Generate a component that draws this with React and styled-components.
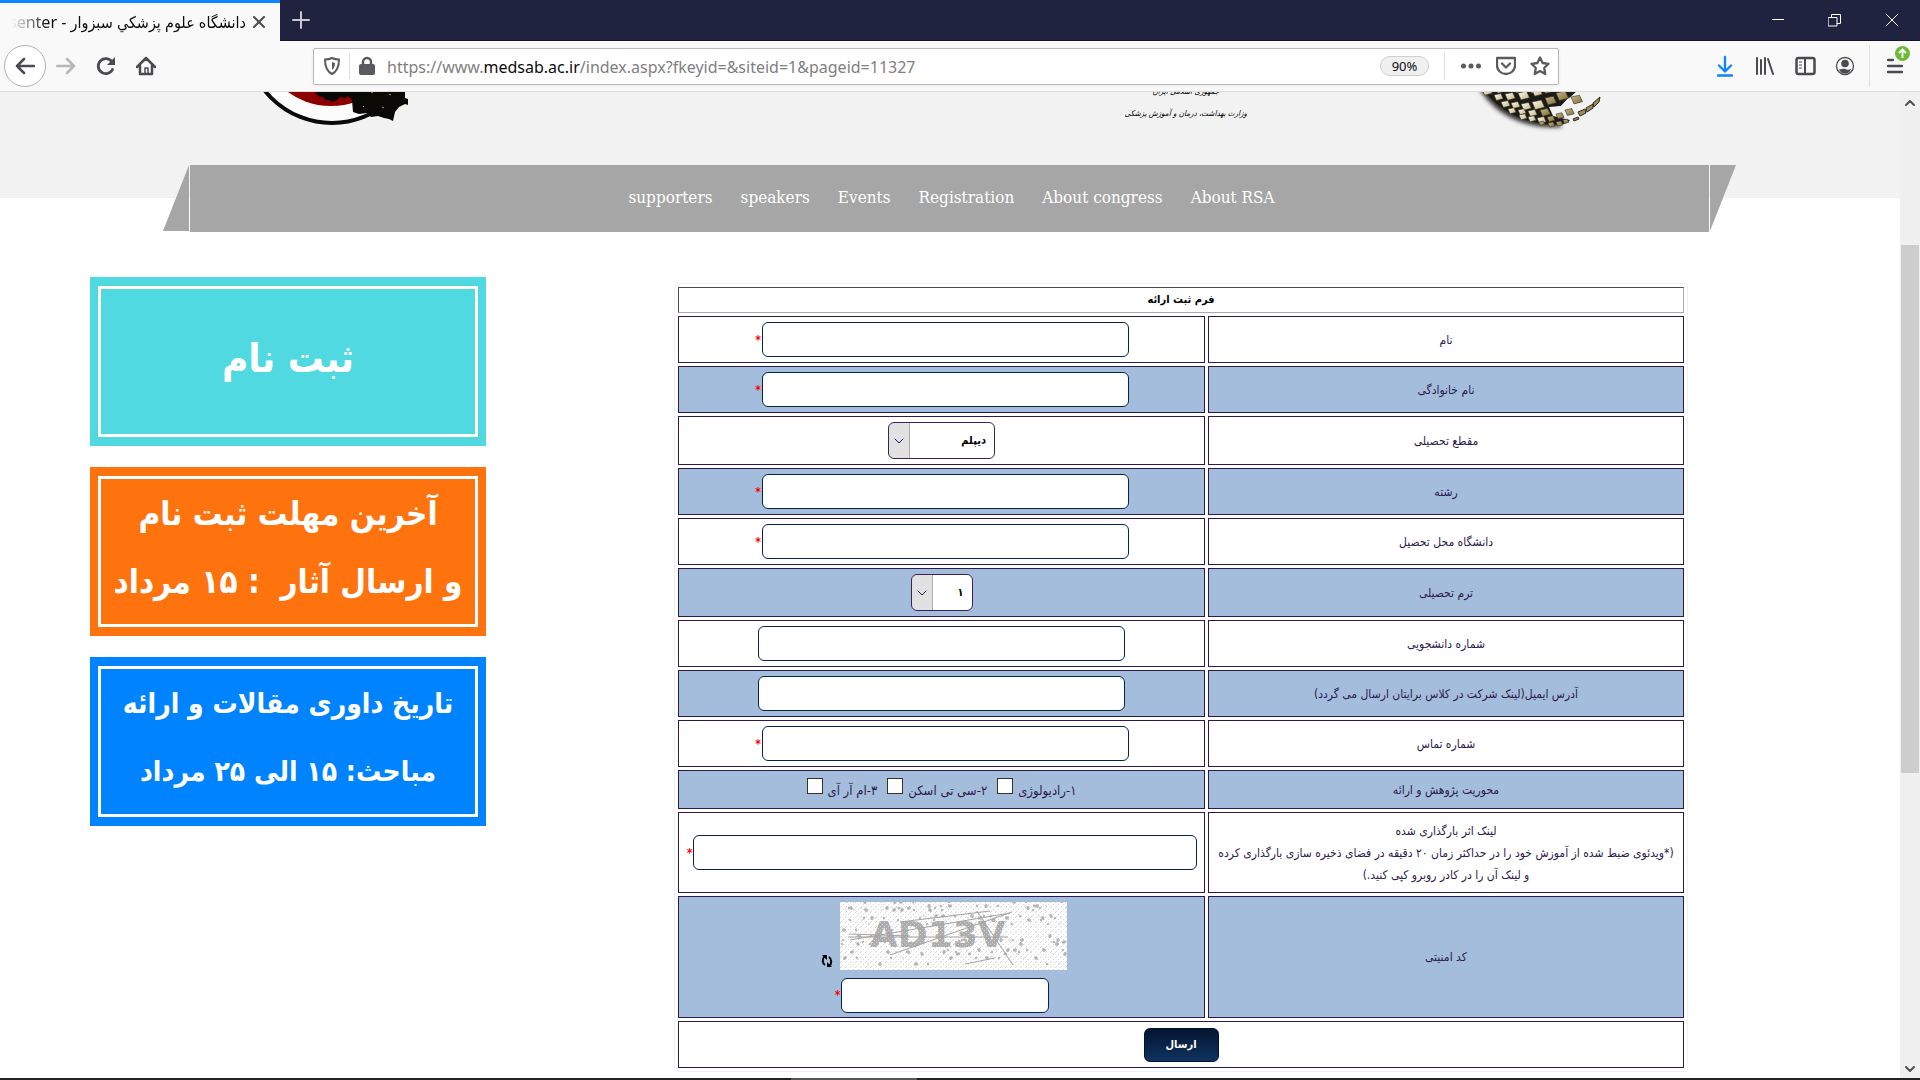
import React from "react";
import styled, { createGlobalStyle } from "styled-components";

const persian = `"DejaVu Sans Condensed", "DejaVu Sans", sans-serif`;
const ui = `"Noto Sans", "Open Sans", "DejaVu Sans Condensed", sans-serif`;
const ink = "#2c1a4d";

const GlobalStyle = createGlobalStyle`
  * { box-sizing: border-box; }
  body { margin: 0; background: #fff; }
  button, input, select { font: inherit; margin: 0; }
`;

const Window = styled.div`
  height: 100vh;
  display: flex;
  flex-direction: column;
  overflow: hidden;
  font-family: ${ui};
`;

/* ---------- browser chrome ---------- */

const TabStrip = styled.div`
  display: flex;
  flex: none;
  height: 41px;
  background: #20233f;
  border-bottom: 1px solid #14142c;
`;

const Tab = styled.div`
  display: flex;
  align-items: center;
  gap: 4px;
  width: 280px;
  height: 41px;
  padding: 0 12px;
  background: #f9f9fa;
  border-top: 3px solid #0a84ff;
`;

const TabTitle = styled.span`
  flex: 1;
  direction: rtl;
  overflow: hidden;
  white-space: nowrap;
  font-size: 16px;
  line-height: 24px;
  color: #0c0c0d;
  mask-image: linear-gradient(to right, transparent, #000 36px);
`;

const IconButton = styled.button`
  display: flex;
  flex: none;
  align-items: center;
  justify-content: center;
  width: ${(p) => p.$w || 40}px;
  height: ${(p) => p.$h || 40}px;
  padding: 0;
  border: 0;
  background: none;
  color: ${(p) => p.$color || "#4a4a4f"};
`;

const Spacer = styled.div`
  flex: 1;
`;

const Toolbar = styled.div`
  display: flex;
  flex: none;
  align-items: center;
  height: 51px;
  background: #f9f9fa;
  border-bottom: 1px solid #dcdcdc;
`;

const NavButtons = styled.div`
  display: flex;
  align-items: center;
  width: 313px;
  padding-left: 4px;
`;

const BackButton = styled(IconButton)`
  border: 1px solid #b1b1b3;
  border-radius: 50%;
  background: #fff;
`;

const UrlBar = styled.div`
  display: flex;
  flex: 1;
  align-items: center;
  height: 37px;
  padding: 0 1px;
  background: #fff;
  border: 1px solid #b8b8b8;
  border-radius: 2px;
  box-shadow: 0 1px 4px rgba(0, 0, 0, 0.06);
`;

const Divider = styled.span`
  flex: none;
  width: 1px;
  height: ${(p) => p.$h}px;
  margin: 0 ${(p) => p.$after || 0}px 0 ${(p) => p.$before || 0}px;
  background: #dedede;
`;

const Url = styled.span`
  flex: 1;
  font-size: 16px;
  line-height: 24px;
  white-space: nowrap;
  overflow: hidden;
  color: #808080;
  padding: 2px 0 0 3px;
  b {
    font-weight: 400;
    color: #0c0c0d;
  }
`;

const ZoomPill = styled.button`
  width: 49px;
  height: 20px;
  margin-right: 15px;
  padding: 0;
  border: 1px solid #cfcfcf;
  border-radius: 10px;
  background: #f0f0f0;
  font-size: 13px;
  line-height: 16px;
  color: #0c0c0d;
`;

const ToolbarEnd = styled.div`
  display: flex;
  align-items: center;
  justify-content: flex-end;
  width: 361px;
`;

const Badge = styled.span`
  position: absolute;
  top: -12px;
  left: 8px;
  display: flex;
`;

const MenuGlyph = styled.span`
  position: relative;
  display: flex;
`;

/* ---------- viewport ---------- */

const Viewport = styled.div`
  display: flex;
  flex: 1;
  min-height: 0;
`;

const Page = styled.div`
  flex: 1;
  min-width: 0;
  overflow: hidden;
`;

const Scrollbar = styled.div`
  display: flex;
  flex-direction: column;
  align-items: center;
  justify-content: space-between;
  width: 20px;
  padding: 6px 0 4px;
  color: #505050;
  background: linear-gradient(#cdcdcd, #cdcdcd) 1px 153px / 18px 528px no-repeat, #f0f0f0;
`;

const TaskbarEdge = styled.div`
  flex: none;
  height: 2px;
  background: linear-gradient(90deg, #555 0 0) 791px 0 / 126px 2px no-repeat, #222;
`;

const Header = styled.header`
  background: linear-gradient(#f2f2f2, #f2f2f2) top / 100% 106px no-repeat;
`;

const Brand = styled.div`
  display: flex;
  justify-content: space-between;
  height: 73px;
  padding: 0 285px 0 250px;
`;

const Ministry = styled.div`
  display: flex;
  gap: 218px;
`;

const MinistryName = styled.div`
  direction: rtl;
  text-align: center;
  font: italic 8px/22px ${persian};
  color: #000;
  white-space: nowrap;
  overflow: hidden;
  p {
    margin: 0;
  }
  p:first-child {
    margin-top: -11px;
  }
`;

const MenuBar = styled.nav`
  display: flex;
  gap: 1px;
  margin: 0 164px 0 163px;
`;

const Wing = styled.span`
  width: 26px;
  height: 66px;
  background: #a6a6a6;
  clip-path: ${(p) => (p.$left ? "polygon(100% 0, 100% 100%, 0 100%)" : "polygon(0 0, 100% 0, 0 100%)")};
`;

const MenuLinks = styled.div`
  display: flex;
  flex: 1;
  justify-content: center;
  gap: 28px;
  height: 67px;
  padding-top: 19px;
  padding-left: 4px;
  background: #a6a6a6;
`;

const MenuLink = styled.a`
  font: 17px/26px "DejaVu Serif Condensed", "DejaVu Serif", serif;
  color: #fff;
  text-decoration: none;
`;

const Content = styled.main`
  display: grid;
  grid-template-columns: minmax(0, 396px) minmax(0, 1014px);
  justify-content: space-between;
  align-items: start;
  padding: 45px 212px 0 90px;
`;

const Banners = styled.aside`
  display: grid;
  gap: 21px;
`;

const Banner = styled.a`
  display: block;
  height: 169px;
  padding: 9px 8px;
  background: ${(p) => p.$color};
  text-decoration: none;
`;

const BannerFrame = styled.span`
  display: flex;
  flex-direction: column;
  justify-content: center;
  height: 100%;
  padding-bottom: 8px;
  border: 3px solid #fff;
  direction: rtl;
  text-align: center;
  white-space: pre;
  color: #fff;
  font: 700 ${(p) => p.$size}px/68px ${persian};
`;

/* ---------- form ---------- */

const FormBox = styled.form`
  margin-top: 6px;
  border: 1px solid #eaf3fc;
  border-radius: 4px;
  direction: rtl;
`;

const FormTable = styled.table`
  width: 100%;
  table-layout: fixed;
  border-collapse: separate;
  border-spacing: 3px;
  font: 12px/22px ${persian};
  color: ${ink};
`;

const LabelCol = styled.col`
  width: 476px;
`;

const Title = styled.th`
  height: 26px;
  padding: 0;
  border: 1px solid #a9a9a9;
  border-top-color: #4c4c4c;
  border-left-color: #4c4c4c;
  font-size: 11px;
  line-height: 20px;
  color: #000;
`;

const Row = styled.tr`
  height: ${(p) => p.$h}px;
  background: ${(p) => (p.$tint ? "#a5bddd" : "#fff")};
`;

const Cell = styled.td`
  padding: 0 2px;
  border: 1px solid ${ink};
  text-align: center;
  background: inherit;
`;

const Field = styled.div`
  display: flex;
  align-items: center;
  justify-content: center;
`;

const TextInput = styled.input`
  width: ${(p) => p.$w}px;
  max-width: calc(100% - 7px);
  height: 35px;
  padding: 0 8px;
  border: 1px solid #06234a;
  border-radius: 6px;
  background: #fff;
`;

const Star = styled.span`
  width: 7px;
  font-weight: 700;
  font-size: 12px;
  line-height: 20px;
  color: #f00;
`;

const SelectBox = styled.span`
  position: relative;
  display: inline-flex;
  width: ${(p) => p.$w}px;
  vertical-align: top;
  svg {
    position: absolute;
    left: 6px;
    top: 16px;
    pointer-events: none;
  }
`;

const Select = styled.select`
  width: 100%;
  height: 37px;
  padding: 0 8px;
  appearance: none;
  border: 1px solid #3a2358;
  border-radius: 6px;
  background: linear-gradient(#adadad, #adadad) 20px 0 / 1px 100% no-repeat,
    linear-gradient(#e1e1e1, #e1e1e1) 0 0 / 20px 100% no-repeat, #fff;
  font-weight: 700;
  font-size: 11px;
  color: #000;
`;

const Checks = styled.div`
  display: flex;
  justify-content: center;
  gap: 10px;
`;

const Check = styled.span`
  display: flex;
  gap: 5px;
  align-items: flex-start;
  font-size: 13px;
  label {
    padding-top: 3px;
    line-height: 20px;
  }
  input {
    appearance: none;
    width: 16px;
    height: 16px;
    border: 1px solid #333;
    background: #fff;
  }
`;

const CaptchaRow = styled(Field)`
  align-items: flex-end;
  gap: 7px;
  padding-left: 5px;
  margin-bottom: 8px;
`;

const RefreshButton = styled.button`
  display: flex;
  padding: 0 0 2px;
  border: 0;
  background: none;
`;

const Submit = styled.button`
  display: block;
  width: 75px;
  height: 34px;
  margin: 0 auto;
  padding: 0;
  border: 1px solid #03132f;
  border-radius: 6px;
  background: linear-gradient(#03152f, #10335f);
  font-weight: 700;
  font-size: 11px;
  color: #fff;
`;

/* ---------- drawings ---------- */

const Svg = ({ w = 20, h = 20, sw = 2, children }) => (
  <svg width={w} height={h} viewBox={`0 0 ${w} ${h}`} fill="none" stroke="currentColor" strokeWidth={sw} strokeLinecap="round" strokeLinejoin="round" aria-hidden="true">
    {children}
  </svg>
);

const Congress = () => (
  <svg width="180" height="42" viewBox="0 0 180 42" aria-hidden="true">
    <ellipse cx="82" cy="-54" rx="91" ry="86" fill="#fcfcfc" />
    <circle cx="82" cy="-55" r="86" fill="none" stroke="#0a0a0a" strokeWidth="4" />
    <ellipse cx="81" cy="-46" rx="67" ry="60" fill="#8c0000" />
    <path d="M65 0 68 4 73 5 75 8 79 8 82 10 87 8 90 5 95 6 98 4 102 8 103 20 109 22 117 21 121 25 128 24 134 26 139 27 143 29 145 20 149 15 155 12 158 13 158 7 155 6 155 0Z" fill="#0a0906" />
    <path d="M121 0l2 1M139 2l2 1M113 14l1 1M132 15l2 1" stroke="#c69325" strokeWidth="1" />
  </svg>
);

const tiles = [
  [17, -3, 9], [30, -5, 9], [48, -6, 10], [63, -7, 12], [77, -6, 11],
  [29, 3, 8], [40, 2, 9], [53, 1, 10], [67, -2, 9], [80, 6, 10], [91, 1, 11], [103, -6, 9],
  [36, 10, 8], [46, 11, 8], [56, 12, 9], [67, 10, 11],
  [43, 17, 7], [53, 18, 7], [63, 19, 8], [75, 18, 9],
  [54, 23, 7], [63, 25, 7], [72, 26, 8],
  [82, 25, 7], [91, 22, 7], [100, 18, 8],
  [74, 30, 5], [83, 31, 6], [91, 30, 6], [98, 28, 5],
  [106, 5, 10],
];

const shards = [
  "M108 27l5-2 1 2-5 2z",
  "M113 20l7-3 1 4-6 3z",
  "M121 16l7-4 0 4-6 4z",
  "M128 11l7-6-1 5-5 5z",
];

const Globe = () => (
  <svg width="150" height="46" viewBox="0 0 150 46" aria-hidden="true">
    <defs>
      <linearGradient id="gold" x1="0" y1="0" x2="1" y2="1">
        <stop offset="0" stopColor="#c9b98a" />
        <stop offset="1" stopColor="#7d6936" />
      </linearGradient>
      <linearGradient id="pale" x1="0" y1="0" x2="1" y2="1">
        <stop offset="0" stopColor="#fffdf0" />
        <stop offset="1" stopColor="#c0b182" />
      </linearGradient>
      <filter id="shade" x="-20%" y="-20%" width="140%" height="150%">
        <feGaussianBlur stdDeviation="2" />
      </filter>
    </defs>
    <path d="M14 -4C28 20 56 38 98 35L86 26 70 4 60 -6Z" fill="#333" filter="url(#shade)" />
    <path d="M18 -3C32 16 56 33 94 33Q102 32 105 28L88 24 84 15 96 14 114 -3Z" fill="#1c1a16" />
    <path d="M86 16 96 14 104 5 107 14 100 17 90 22Z" fill="#f2f2f2" />
    {tiles.map(([x, y, s]) => (
      <path
        key={`${x}-${y}`}
        d={`M${x} ${y}l${s * 0.85} ${-s * 0.18} ${s * 0.3} ${s * 0.65} ${-s * 0.85} ${s * 0.22}Z`}
        fill={x < 74 ? "url(#pale)" : "url(#gold)"}
        stroke="#3a3322"
        strokeWidth="0.6"
      />
    ))}
    {shards.map((d) => (
      <path key={d} d={d} fill="#9c8a58" stroke="#2a261b" strokeWidth="1" />
    ))}
  </svg>
);

const specks = Array.from({ length: 190 }, (_, i) => {
  const a = (i * 7919 + 13) % 227;
  const b = (i * 104729 + i * i * 31) % 68;
  return [a, b, 1 + (i % 3)];
});

const Captcha = () => (
  <svg width="227" height="68" viewBox="0 0 227 68" direction="ltr" role="img" aria-label="AD13V">
    <defs>
      <pattern id="grain" width="5" height="5" patternUnits="userSpaceOnUse">
        <rect width="5" height="5" fill="#fdfdfd" />
        <path d="M0 0h1v1H0zM3 2h1v1H3zM1 4h1v1H1z" fill="#d9d9d9" />
      </pattern>
      <pattern id="mesh" width="4" height="4" patternUnits="userSpaceOnUse">
        <rect width="4" height="4" fill="#adadad" />
        <path d="M0 0h1v1H0zM2 2h1v1H2z" fill="#cfcfcf" />
      </pattern>
    </defs>
    <rect width="227" height="68" fill="url(#grain)" />
    {specks.map(([x, y, r], i) => (
      <ellipse key={i} cx={x} cy={y} rx={r * 0.7} ry={r * 0.55} fill="#b5b5b5" transform={`rotate(${i * 37} ${x} ${y})`} />
    ))}
    <text x="30" y="45" fontFamily="DejaVu Sans, sans-serif" fontWeight="700" fontSize="36" direction="ltr" fill="url(#mesh)">AD13V</text>
    <path d="M8 35H168M10 38 170 11M60 20 150 9M50 53 172 10M137 9 173 63M9 32 70 34M125 62 155 56" fill="none" stroke="#a4a4a4" strokeWidth="1" />
  </svg>
);

/* ---------- data ---------- */

const menu = ["supporters", "speakers", "Events", "Registration", "About congress", "About RSA"];

const banners = [
  { color: "#50d9e0", size: 40, lines: ["ثبت نام"] },
  { color: "#ff730f", size: 33, lines: ["آخرین مهلت ثبت نام", "و ارسال آثار  : ۱۵ مرداد"] },
  { color: "#0083ff", size: 28, lines: ["تاریخ داوری مقالات و ارائه", "مباحث: ۱۵ الی ۲۵ مرداد"] },
];

const topics = ["۱-رادیولوژی", "۲-سی تی اسکن", "۳-ام آر آی"];

const TextField = ({ id, w = 367, required }) => (
  <Field>
    <TextInput id={id} type="text" $w={w} />
    {required && <Star>*</Star>}
  </Field>
);

const Picker = ({ id, w, value }) => (
  <SelectBox $w={w}>
    <Select id={id}>
      <option>{value}</option>
    </Select>
    <Svg w={10} h={6} sw={1}><path d="M1 1l4 4 4-4" /></Svg>
  </SelectBox>
);

const rows = [
  { id: "name", label: "نام", h: 47, field: <TextField id="name" required /> },
  { id: "family", label: "نام خانوادگی", h: 47, field: <TextField id="family" required /> },
  { id: "degree", label: "مقطع تحصیلی", h: 49, field: <Picker id="degree" w={107} value="دیپلم" /> },
  { id: "major", label: "رشته", h: 47, field: <TextField id="major" required /> },
  { id: "university", label: "دانشگاه محل تحصیل", h: 47, field: <TextField id="university" required /> },
  { id: "term", label: "ترم تحصیلی", h: 49, field: <Picker id="term" w={62} value="۱" /> },
  { id: "student", label: "شماره دانشجویی", h: 47, field: <TextField id="student" /> },
  { id: "email", label: "آدرس ایمیل(لینک شرکت در کلاس برایتان ارسال می گردد)", h: 47, field: <TextField id="email" /> },
  { id: "phone", label: "شماره تماس", h: 47, field: <TextField id="phone" required /> },
  {
    id: "topic0",
    label: "محوریت پژوهش و ارائه",
    h: 39,
    field: (
      <Checks>
        {topics.map((t, i) => (
          <Check key={t}>
            <label htmlFor={`topic${i}`}>{t}</label>
            <input id={`topic${i}`} type="checkbox" />
          </Check>
        ))}
      </Checks>
    ),
  },
  {
    id: "link",
    label: (
      <>
        لینک اثر بارگذاری شده
        <br />
        (*ویدئوی ضبط شده از آموزش خود را در حداکثر زمان ۲۰ دقیقه در فضای ذخیره سازی بارگذاری کرده
        <br />و لینک آن را در کادر روبرو کپی کنید.)
      </>
    ),
    h: 81,
    field: <TextField id="link" w={504} required />,
  },
  {
    id: "code",
    label: "کد امنیتی",
    h: 122,
    field: (
      <>
        <CaptchaRow>
          <Captcha />
          <RefreshButton type="button" aria-label="refresh">
            <svg width="12" height="14" viewBox="0 0 12 14" fill="none" stroke="#000" strokeWidth="2" aria-hidden="true">
              <path d="M4 2C1 4 1 9 4 11M8 12c3-2 3-7 0-9" />
              <path d="M1 1h5v5zM11 13H6V8z" fill="#000" stroke="none" />
            </svg>
          </RefreshButton>
        </CaptchaRow>
        <TextField id="code" w={208} required />
      </>
    ),
  },
];

export default function App() {
  return (
    <Window>
      <GlobalStyle />
      <TabStrip>
        <Tab>
          <TabTitle>دانشگاه علوم پزشكي سبزوار - persenter</TabTitle>
          <IconButton $w={18} $h={18} aria-label="Close tab"><Svg w={12} h={12}><path d="M1 1l10 10M11 1L1 11" /></Svg></IconButton>
        </Tab>
        <IconButton $w={42} $color="#c8c8d0" aria-label="New tab"><Svg w={18} h={18}><path d="M9 1v16M1 9h16" /></Svg></IconButton>
        <Spacer />
        <IconButton $w={57} $color="#fff" aria-label="Minimize"><Svg w={12} h={12} sw={1}><path d="M0 5.5h12" /></Svg></IconButton>
        <IconButton $w={57} $color="#fff" aria-label="Restore"><Svg w={13} h={13} sw={1}><path d="M.5 3.500h8.500v8.500H.5zM3.500 3.500v-3h9v9H9" /></Svg></IconButton>
        <IconButton $w={57} $color="#fff" aria-label="Close"><Svg w={14} h={14} sw={1}><path d="M1 1l12 12M13 1L1 13" /></Svg></IconButton>
      </TabStrip>

      <Toolbar>
        <NavButtons>
          <BackButton $w={42} $h={42} aria-label="Back"><Svg><path d="M19 10H2M9 3l-7 7 7 7" strokeWidth="2.500" /></Svg></BackButton>
          <IconButton $color="#b8b8ba" aria-label="Forward"><Svg><path d="M1 10h17M11 3l7 7-7 7" strokeWidth="2.500" /></Svg></IconButton>
          <IconButton aria-label="Reload"><Svg><path d="M16.500 13.500a7.500 7.500 0 1 1-.5-7.500" strokeWidth="2.800" /><path d="M19 1v8h-8z" fill="currentColor" stroke="none" /></Svg></IconButton>
          <IconButton aria-label="Home"><Svg><path d="M1 11 10 2l9 9M4 10v8h12v-8M10 2v2" strokeWidth="2.500" /><path d="M9 18v-6h3v6" strokeWidth="1.500" /></Svg></IconButton>
        </NavButtons>
        <UrlBar>
          <IconButton $w={34} $h={34} $color="#5a5a5f" aria-label="Protections"><Svg w={16} h={18}><path d="M8 1c2 1 4 1.500 7 1.500C15 9 14 14 8 17 2 14 1 9 1 2.500 4 2.500 6 2 8 1z" /><path d="M8 5v8c2-1.500 3-4 3-7z" fill="currentColor" stroke="none" /></Svg></IconButton>
          <Divider $h={26} />
          <IconButton $w={34} $h={34} $color="#5a5a5f" aria-label="Site information"><Svg w={16} h={20}><path d="M4 10V6a4 4 0 0 1 8 0v4" strokeWidth="2.500" /><rect x="1" y="9" width="14" height="9" rx="1" fill="currentColor" /></Svg></IconButton>
          <Url>https://www.<b>medsab.ac.ir</b>/index.aspx?fkeyid=&amp;siteid=1&amp;pageid=11327</Url>
          <ZoomPill>90%</ZoomPill>
          <Divider $h={26} $after={8} />
          <IconButton $w={36} $h={34} $color="#5a5a5f" aria-label="Page actions"><Svg w={20} h={6}><g fill="currentColor" stroke="none"><circle cx="2.500" cy="3" r="2.500" /><circle cx="10" cy="3" r="2.500" /><circle cx="17.500" cy="3" r="2.500" /></g></Svg></IconButton>
          <IconButton $w={34} $h={34} $color="#5a5a5f" aria-label="Save to Pocket"><Svg><path d="M1 2h18v7.500a9 8.500 0 0 1-18 0zM6 7.500l4 4 4-4" strokeWidth="2.300" /></Svg></IconButton>
          <IconButton $w={34} $h={34} $color="#5a5a5f" aria-label="Bookmark"><Svg><path d="M10 1.500l2.600 5.500 5.900.8-4.300 4.200 1.100 6-5.300-2.900L4.700 18l1.100-6L1.500 7.800 7.400 7z" strokeWidth="2.300" /></Svg></IconButton>
        </UrlBar>
        <ToolbarEnd>
          <IconButton $color="#0a84ff" aria-label="Downloads"><Svg w={16} h={22} sw={2.300}><path d="M8 2v14M2 10.500l6 6 6-6M1 20.500h14" /></Svg></IconButton>
          <IconButton aria-label="Library"><Svg><path d="M2 2v16M6 4v14M10 2v16M13 3l5 15" /></Svg></IconButton>
          <IconButton aria-label="Sidebars"><Svg w={21}><rect x="1.500" y="2" width="18" height="16" rx="2" strokeWidth="2.500" /><path d="M10 2v16" /><path d="M4.500 6h2M4.500 9h2M4.500 12h2" strokeWidth="1" /></Svg></IconButton>
          <IconButton aria-label="Account"><Svg><circle cx="10" cy="10" r="8.500" strokeWidth="1.300" /><circle cx="10" cy="7.500" r="3.800" fill="currentColor" stroke="none" /><path d="M4 13c3 1 3-1 6 0s3 1 6 0c-1 3-3 4.500-6 4.500S5 16 4 13z" fill="currentColor" stroke="none" /></Svg></IconButton>
          <Divider $h={42} $before={4} />
          <IconButton $w={50} aria-label="Open menu">
            <MenuGlyph>
              <Svg w={16} h={16}><path d="M1 2h5M1 8h14M1 14h14" strokeWidth="2.300" /></Svg>
              <Badge>
                <svg width="15" height="15" viewBox="0 0 15 15" aria-hidden="true"><circle cx="7.500" cy="7.500" r="7.500" fill="#6dbb35" /><path d="M7.500 12V4M4 7l3.500-3.500L11 7" fill="none" stroke="#fff" strokeWidth="1.800" /></svg>
              </Badge>
            </MenuGlyph>
          </IconButton>
        </ToolbarEnd>
      </Toolbar>

      <Viewport>
        <Page>
          <Header>
            <Brand>
              <Congress />
              <Ministry>
                <MinistryName>
                  <p>جمهوری اسلامی ایران</p>
                  <p>وزارت بهداشت، درمان و آموزش پزشکی</p>
                </MinistryName>
                <Globe />
              </Ministry>
            </Brand>
            <MenuBar>
              <Wing $left />
              <MenuLinks>
                {menu.map((m) => (
                  <MenuLink key={m} href="#">{m}</MenuLink>
                ))}
              </MenuLinks>
              <Wing />
            </MenuBar>
          </Header>

          <Content>
            <Banners>
              {banners.map((b) => (
                <Banner key={b.color} href="#" $color={b.color}>
                  <BannerFrame $size={b.size}>
                    {b.lines.map((l) => (
                      <span key={l}>{l}</span>
                    ))}
                  </BannerFrame>
                </Banner>
              ))}
            </Banners>

            <FormBox>
              <FormTable>
                <colgroup>
                  <LabelCol />
                  <col />
                </colgroup>
                <thead>
                  <tr>
                    <Title colSpan={2}>فرم ثبت ارائه</Title>
                  </tr>
                </thead>
                <tbody>
                  {rows.map((r, i) => (
                    <Row key={r.id} $h={r.h} $tint={i % 2 === 1}>
                      <Cell>
                        <label htmlFor={r.id}>{r.label}</label>
                      </Cell>
                      <Cell>{r.field}</Cell>
                    </Row>
                  ))}
                  <Row $h={47}>
                    <Cell colSpan={2}>
                      <Submit type="button">ارسال</Submit>
                    </Cell>
                  </Row>
                </tbody>
              </FormTable>
            </FormBox>
          </Content>
        </Page>
        <Scrollbar>
          <Svg w={10} h={10}><path d="M1 7l4-4 4 4" /></Svg>
          <Svg w={10} h={10}><path d="M1 3l4 4 4-4" /></Svg>
        </Scrollbar>
      </Viewport>
      <TaskbarEdge />
    </Window>
  );
}
